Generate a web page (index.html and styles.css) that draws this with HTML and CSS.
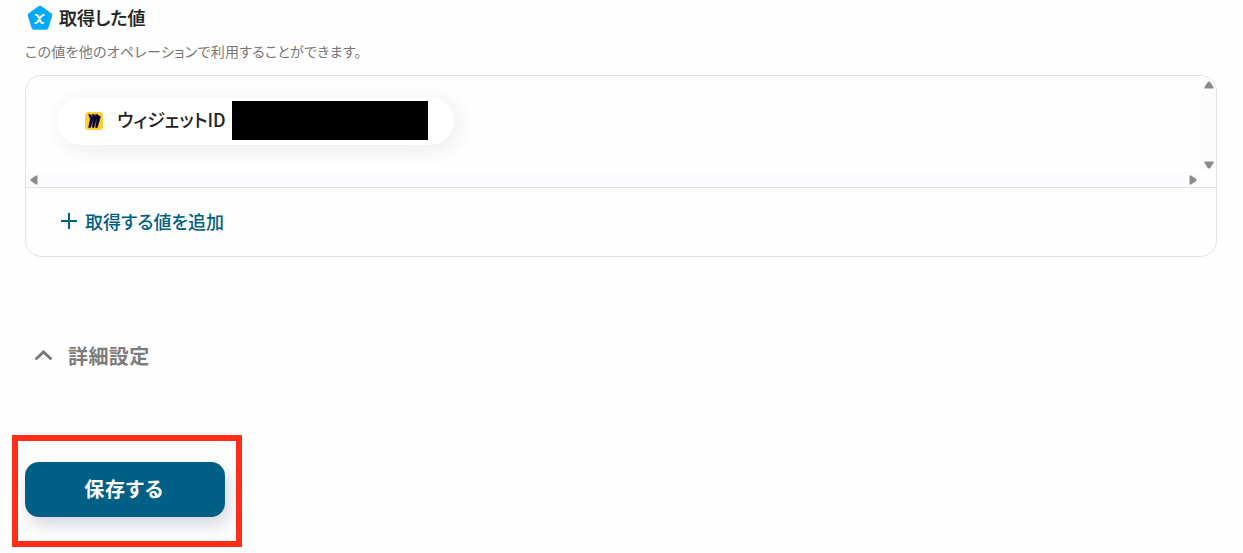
FILE: index.html
```
<!DOCTYPE html>
<html lang="ja">
<head>
  <meta charset="UTF-8">
  <meta name="viewport" content="width=device-width, initial-scale=1.0">
  <title>取得した値</title>
  <link rel="stylesheet" href="styles.css">
</head>
<body>
  <div class="heading">
    <svg width="26" height="26" viewBox="0 0 26 26">
      <path d="M11.4 1.2Q13 .1 14.6 1.2L24.2 8.2Q25.6 9.3 25.1 11L21.4 22.9Q20.8 24.7 19 24.7H7Q5.2 24.7 4.6 22.9L.9 11Q.4 9.3 1.8 8.2Z" fill="#00aaf9"/>
      <path d="M9 10H9.6Q10.6 10 11.1 11L14 17Q14.5 18 15.5 18H16.3M16.8 10Q15.3 10 14.5 11.2L10.6 17Q9.9 18 8.4 18" fill="none" stroke="#fff" stroke-width="2" stroke-linecap="round"/>
    </svg>
    <h2>取得した値</h2>
  </div>
  <p class="note">この値を他のオペレーションで利用することができます。</p>

  <div class="card">
    <div class="values">
      <div class="values-body">
        <div class="pill">
          <svg width="18" height="18" viewBox="0 0 18 18">
            <rect width="18" height="18" rx="3.5" fill="#ffd02f"/>
            <path d="M12.3 2.5H10.5L12 5.1L8.9 2.5H7.1L8.7 5.8L5.4 2.5H3.6L5.3 6.9L3.6 15.5H5.4L8.7 6.2L7.1 15.5H8.9L12 5.6L10.5 15.5H12.3L15.5 4.8Z" fill="#050038" stroke="#050038" stroke-width=".5"/>
          </svg>
          <span class="pill-name">ウィジェットID</span>
          <span class="mask"></span>
        </div>
      </div>
      <div class="scroll-y">
        <svg width="10" height="8" viewBox="0 0 10 8"><path d="M4 .8Q5 0 6 .8L9.5 6V7.5H.5V6Z"/></svg>
        <svg width="10" height="8" viewBox="0 0 10 8"><path d="M4 7.2Q5 8 6 7.2L9.5 2V.5H.5V2Z"/></svg>
      </div>
      <div class="scroll-x">
        <svg width="8" height="10" viewBox="0 0 8 10"><path d="M.8 4Q0 5 .8 6L6 9.5H7.5V.5H6Z"/></svg>
        <svg width="8" height="10" viewBox="0 0 8 10"><path d="M7.2 4Q8 5 7.2 6L2 9.5H.5V.5H2Z"/></svg>
      </div>
    </div>
    <div class="add">
      <svg width="16" height="16" viewBox="0 0 16 16"><path d="M8 0V16M0 8H16" stroke="#005f85" stroke-width="2"/></svg>
      <span>取得する値を追加</span>
    </div>
  </div>

  <div class="details">
    <svg width="19" height="12" viewBox="0 0 19 12"><path d="M2.500 9.500L9.500 3L16.500 9.500" fill="none" stroke="#777" stroke-width="3" stroke-linecap="round"/></svg>
    <span>詳細設定</span>
  </div>

  <div class="highlight">
    <button class="save">保存する</button>
  </div>
</body>
</html>
```
FILE: styles.css
```
* {
  box-sizing: border-box;
}
body {
  margin: 0;
  padding: 5px 26px 0 25px;
  height: 553px;
  overflow: hidden;
  background-color: #fefefe;
  color: #222;
  font-family: "Noto Sans CJK JP", sans-serif;
  font-feature-settings: "palt";
}
svg {
  display: block;
  flex: none;
}
.heading {
  display: flex;
  align-items: center;
  height: 26px;
  padding-left: 2px;
  gap: 6px;
}
h2 {
  margin: 0;
  padding-bottom: 2px;
  font-size: 18px;
  font-weight: 500;
  line-height: 24px;
  -webkit-text-stroke: 0.2px;
}
.note {
  margin: 10px 0 13px;
  font-size: 14px;
  line-height: 21px;
  letter-spacing: 0.28px;
  color: #777;
}
.card {
  height: 182px;
  border: 1px solid #e2e2e5;
  border-radius: 16px;
  overflow: hidden;
}
.values {
  display: grid;
  grid-template-columns: 1fr 15px;
  grid-template-rows: 96px 15px;
  border-bottom: 1px solid #e2e2e5;
}
.values-body {
  padding: 21px 31px 0;
  overflow: hidden;
}
.pill {
  display: flex;
  align-items: center;
  width: 397px;
  height: 48px;
  padding: 0 0 1px 28px;
  border-radius: 24px;
  background-color: #fff;
  box-shadow: 4px 4px 20px rgba(60, 40, 80, 0.09);
}
.pill-name {
  width: 115px;
  margin-left: 14px;
  padding-bottom: 2px;
  font-size: 18px;
  font-weight: 500;
  line-height: 25px;
  white-space: nowrap;
}
.mask {
  width: 196px;
  height: 39px;
  margin-top: -1px;
  background-color: #000;
}
.scroll-y,
.scroll-x {
  display: flex;
  align-items: center;
  justify-content: space-between;
  background-color: #fcfbfd;
  fill: #8b8b8b;
}
.scroll-y {
  flex-direction: column;
  padding: 5px 0 3px;
}
.scroll-x {
  padding: 0 4px;
}
.add {
  display: flex;
  align-items: center;
  height: 66px;
  padding-left: 35px;
  gap: 8px;
  font-size: 18px;
  font-weight: 500;
  color: #005f85;
}
.add span {
  padding-bottom: 1px;
}
.details {
  display: flex;
  align-items: center;
  height: 30px;
  margin-top: 83px;
  padding-left: 9px;
  gap: 15px;
  font-size: 20px;
  font-weight: 700;
  letter-spacing: 0.4px;
  color: #7c7c7c;
}
.highlight {
  width: 230px;
  height: 112px;
  margin: 65px 0 0 -13px;
  padding: 21px 7px;
  border: 6px solid #ff2d1a;
}
.save {
  display: block;
  width: 200px;
  height: 55px;
  padding: 0 2px 2px 0;
  border: 0;
  border-radius: 14px;
  background-color: #005f85;
  box-shadow: 4px 8px 16px rgba(50, 60, 110, 0.2);
  color: #fff;
  font: inherit;
  font-feature-settings: "palt";
  font-size: 20px;
  font-weight: 700;
  letter-spacing: 0.8px;
}
```
